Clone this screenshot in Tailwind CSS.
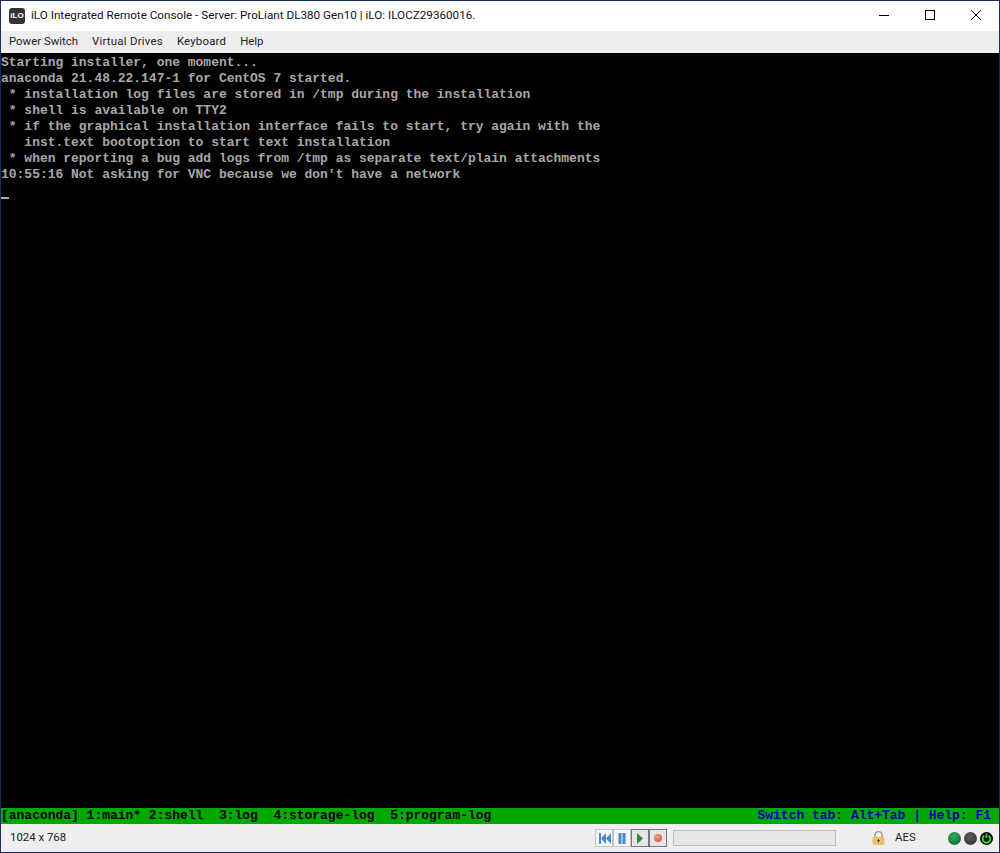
<!DOCTYPE html>
<html lang="en">
<head>
    <meta charset="UTF-8">
    <title>iLO Integrated Remote Console</title>
    <script src="https://cdn.jsdelivr.net/npm/@tailwindcss/browser@4"></script>
</head>
<body class="bg-[#1c2b5a] overflow-hidden">
    <div class="h-[853px] w-[1000px] pt-px pb-px px-px flex flex-col font-['Roboto','Noto_Sans',sans-serif]">
        <!-- title bar -->
        <div class="h-[30px] bg-white flex items-center shrink-0">
            <div class="w-4 h-4 ml-2 rounded-[3px] bg-[#333] text-white text-[8px] font-bold flex items-center justify-center font-['Liberation_Sans',sans-serif]">iLO</div>
            <div class="ml-[6px] text-[11.7px] text-[#111] whitespace-nowrap">iLO Integrated Remote Console - Server: ProLiant DL380 Gen10 | iLO: ILOCZ29360016.</div>
            <div class="ml-auto flex items-center">
                <svg class="w-[46px] h-[30px]" viewBox="0 0 46 30"><path d="M18 14.500h10" stroke="#000" fill="none"/></svg>
                <svg class="w-[46px] h-[30px]" viewBox="0 0 46 30"><rect x="18.500" y="9.500" width="9" height="9" stroke="#000" fill="none"/></svg>
                <svg class="w-[46px] h-[30px]" viewBox="0 0 46 30"><path d="M18 9l10 10M28 9l-10 10" stroke="#000" fill="none"/></svg>
            </div>
        </div>
        <!-- menu -->
        <div class="h-[22px] bg-[#eeeeee] flex items-center gap-[14px] pl-2 text-[11.4px] text-[#222] shrink-0">
            <span>Power Switch</span>
            <span class="tracking-[0.25px]">Virtual Drives</span>
            <span class="tracking-[0.2px]">Keyboard</span>
            <span>Help</span>
        </div>
        <!-- console -->
        <div class="flex-1 pt-[2px] bg-black text-[#a8a8a8] font-['Liberation_Mono',monospace] font-bold text-[12.98px] leading-[16px]">
<pre class="font-['Liberation_Mono',monospace]">Starting installer, one moment...
anaconda 21.48.22.147-1 for CentOS 7 started.
 * installation log files are stored in /tmp during the installation
 * shell is available on TTY2
 * if the graphical installation interface fails to start, try again with the
   inst.text bootoption to start text installation
 * when reporting a bug add logs from /tmp as separate text/plain attachments
10:55:16 Not asking for VNC because we don't have a network</pre>
            <div class="w-2 h-[2px] mt-[14px] bg-[#a8a8a8]"></div>
        </div>
        <!-- tmux status -->
        <div class="h-4 bg-[#00a800] flex justify-between font-['Liberation_Mono',monospace] font-bold text-[12.98px] leading-[16px] whitespace-pre shrink-0">
            <span class="text-black">[anaconda] 1:main* 2:shell  3:log  4:storage-log  5:program-log</span>
            <span class="text-[#0000a8] pr-2">Switch tab: Alt+Tab | Help: F1</span>
        </div>
        <!-- status bar -->
        <div class="h-7 bg-[#f0eeee] flex items-center text-[11.4px] text-[#222] shrink-0">
            <span class="ml-[9px]">1024 x 768</span>
            <div class="ml-auto flex items-center pr-[6px]">
                <div class="flex h-[18px]">
                    <div class="w-[18px] h-[18px] border border-[#c4c4c4] bg-[#f6f6f6] flex items-center justify-center">
                        <svg class="w-[13px] h-[11px]" viewBox="0 0 13 11"><path d="M1 0h2v11H1zM8 0v11L3 5.500zM13 0v11L8 5.500z" fill="#4f86d2"/></svg>
                    </div>
                    <div class="w-[18px] h-[18px] border border-[#c4c4c4] bg-[#f6f6f6] flex items-center justify-center">
                        <svg class="w-[8px] h-[11px]" viewBox="0 0 8 11"><path d="M0.500 0h3v11h-3zM4.500 0h3v11h-3z" fill="#4f86d2"/></svg>
                    </div>
                    <div class="w-[18px] h-[18px] border border-[#777] bg-[#e6e6e6] flex items-center justify-center">
                        <svg class="w-[8px] h-[11px]" viewBox="0 0 8 11"><path d="M1 0v11l6-5.500z" fill="#2f8a3a"/></svg>
                    </div>
                    <div class="w-[18px] h-[18px] border border-[#777] bg-[#e6e6e6] flex items-center justify-center">
                        <div class="w-2 h-2 rounded-full bg-[radial-gradient(circle_at_40%_35%,#f4a58a,#d8401f)]"></div>
                    </div>
                </div>
                <div class="ml-[6px] w-[163px] h-4 border border-[#bdbdbd] bg-[#e6e6e6]"></div>
                <svg class="ml-[36px] w-[13px] h-[14px]" viewBox="0 0 13 14">
                    <path d="M3 6.500V4a3.500 3.500 0 0 1 7 0v2.500" fill="none" stroke="#a89a80" stroke-width="1.500"/>
                    <rect x="0.500" y="6" width="12" height="8" rx="1" fill="#e8c070"/>
                    <path d="M6.500 8v3.500M5 9.500h3" stroke="#6b4a10"/>
                </svg>
                <span class="ml-[10px] w-[21px]">AES</span>
                <div class="ml-[32px] flex items-center gap-[3px]">
                    <div class="w-[13px] h-[13px] rounded-full bg-[radial-gradient(circle_at_45%_35%,#2fae62,#07592a)]"></div>
                    <div class="w-[13px] h-[13px] rounded-full bg-[radial-gradient(circle_at_45%_35%,#5a5a5a,#2c2c2c)]"></div>
                    <div class="w-[13px] h-[13px] rounded-full bg-black flex items-center justify-center">
                        <svg class="w-[11px] h-[11px]" viewBox="0 0 10 10"><path d="M3 2.500a3.500 3.500 0 1 0 4 0M5 0.500v4" fill="none" stroke="#22e622" stroke-width="1.700"/></svg>
                    </div>
                </div>
            </div>
        </div>
    </div>
</body>
</html>
